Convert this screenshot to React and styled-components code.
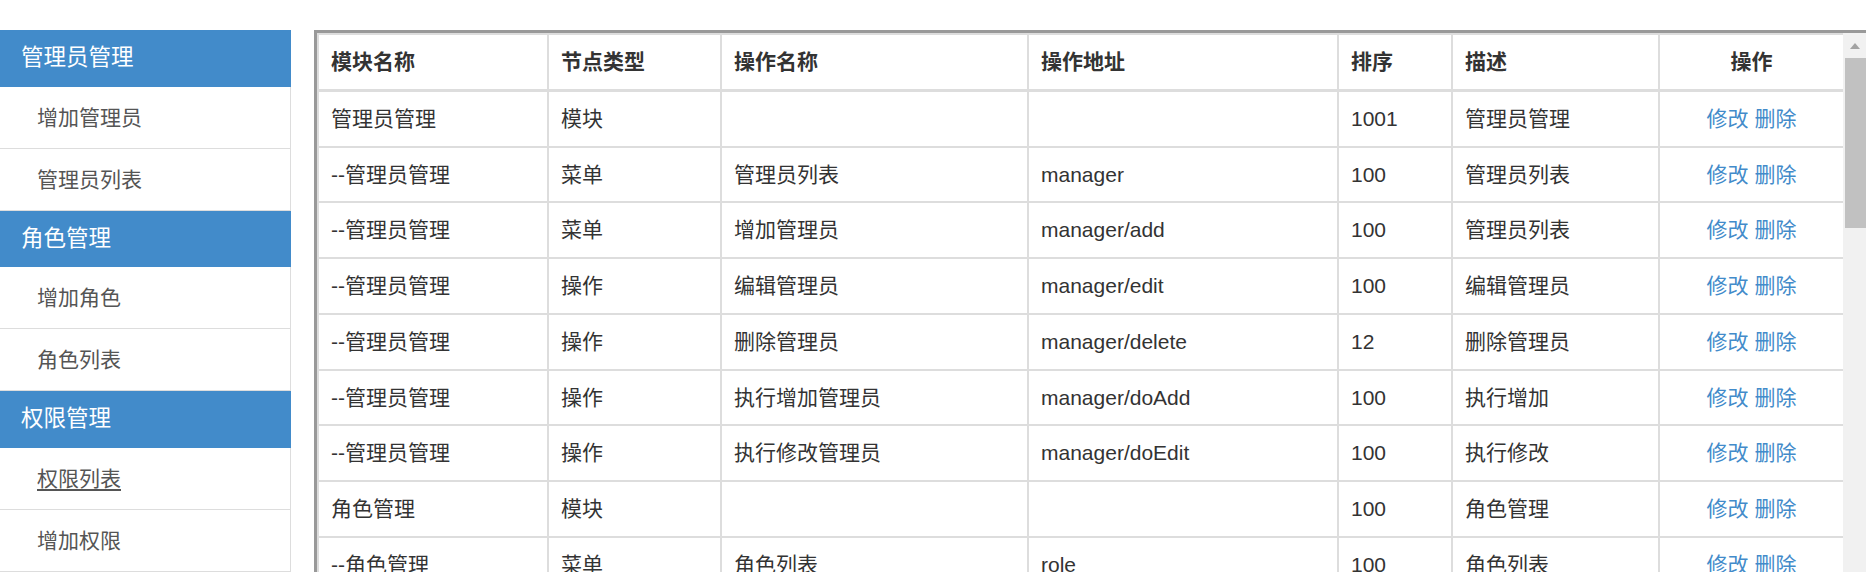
import React from "react";
import styled, { createGlobalStyle } from "styled-components";

const GlobalStyle = createGlobalStyle`
  html, body {
    margin: 0;
    padding: 0;
    overflow: hidden;
    background: #fff;
  }
  body {
    font-family: "Liberation Sans", "Noto Sans CJK SC", sans-serif;
    color: #333;
  }
`;

const menu = [
  { title: "管理员管理", items: ["增加管理员", "管理员列表"] },
  { title: "角色管理", items: ["增加角色", "角色列表"] },
  { title: "权限管理", items: ["权限列表", "增加权限"] },
];

const mod = (name) => [name, "模块", "", "", "100", name];

const rows = [
  ["管理员管理", "模块", "", "", "1001", "管理员管理"],
  ["--管理员管理", "菜单", "管理员列表", "manager", "100", "管理员列表"],
  ["--管理员管理", "菜单", "增加管理员", "manager/add", "100", "管理员列表"],
  ["--管理员管理", "操作", "编辑管理员", "manager/edit", "100", "编辑管理员"],
  ["--管理员管理", "操作", "删除管理员", "manager/delete", "12", "删除管理员"],
  ["--管理员管理", "操作", "执行增加管理员", "manager/doAdd", "100", "执行增加"],
  ["--管理员管理", "操作", "执行修改管理员", "manager/doEdit", "100", "执行修改"],
  mod("角色管理"),
  ["--角色管理", "菜单", "角色列表", "role", "100", "角色列表"],
  ["--角色管理", "菜单", "增加角色", "role/add", "100", "增加角色"],
  ["--角色管理", "操作", "编辑角色", "role/edit", "100", "编辑角色"],
  ["--角色管理", "操作", "删除角色", "role/delete", "100", "删除角色"],
];

const headers = ["模块名称", "节点类型", "操作名称", "操作地址", "排序", "描述", "操作"];
const widths = [230, 173, 307, 310, 114, 207, 185];

const App = () => {
  return (
    <Page>
      <GlobalStyle />
      <Sidebar>
        {menu.map((group) => (
          <React.Fragment key={group.title}>
            <GroupTitle>{group.title}</GroupTitle>
            {group.items.map((item) => (
              <MenuItem key={item}>
                <MenuLink href="#" $active={item === "权限列表"}>
                  {item}
                </MenuLink>
              </MenuItem>
            ))}
          </React.Fragment>
        ))}
      </Sidebar>
      <Panel>
        <TableViewport>
          <Table>
            <colgroup>
              {widths.map((w, i) => (
                <col key={i} style={{ width: w }} />
              ))}
            </colgroup>
            <thead>
              <tr>
                {headers.map((h, i) => (
                  <Th key={h} $center={i === 6}>
                    {h}
                  </Th>
                ))}
              </tr>
            </thead>
            <tbody>
              {rows.map((r, i) => (
                <tr key={i}>
                  {r.map((c, j) => (
                    <Td key={j}>{c}</Td>
                  ))}
                  <Td $center>
                    <ActionLink href="#">修改</ActionLink>{" "}
                    <ActionLink href="#">删除</ActionLink>
                  </Td>
                </tr>
              ))}
            </tbody>
          </Table>
        </TableViewport>
        <ScrollBar>
          <ScrollArrow>
            <ArrowUp />
          </ScrollArrow>
          <ScrollThumb />
        </ScrollBar>
      </Panel>
    </Page>
  );
};

const Page = styled.div`
  display: flex;
  align-items: flex-start;
  gap: 23px;
  width: 1866px;
  padding-top: 30px;
`;

const Sidebar = styled.div`
  flex: none;
  width: 291px;
  display: flex;
  flex-direction: column;
`;

const GroupTitle = styled.div`
  height: 56.5px;
  line-height: 56.5px;
  padding-left: 21px;
  background-color: #428bca;
  color: #fff;
  font-size: 22.5px;
`;

const MenuItem = styled.div`
  height: 61px;
  line-height: 61px;
  padding-left: 37px;
  border-right: 1px solid #ddd;
  border-bottom: 1px solid #ddd;
  font-size: 21px;
`;

const MenuLink = styled.a`
  color: #555;
  text-decoration: ${(p) => (p.$active ? "underline" : "none")};
  text-underline-offset: 3px;
`;

const Panel = styled.div`
  flex: none;
  display: flex;
  box-sizing: border-box;
  width: 1555px;
  height: 566px;
  border: 3px solid #999;
`;

const TableViewport = styled.div`
  flex: 1;
  min-width: 0;
  overflow: hidden;
`;

const ScrollBar = styled.div`
  flex: none;
  width: 23px;
  display: flex;
  flex-direction: column;
  background: #f1f1f1;
`;

const ScrollArrow = styled.div`
  height: 25px;
  display: flex;
  align-items: center;
  justify-content: center;
`;

const ArrowUp = styled.div`
  width: 0;
  height: 0;
  border-left: 5.5px solid transparent;
  border-right: 5.5px solid transparent;
  border-bottom: 6px solid #a3a3a3;
`;

const ScrollThumb = styled.div`
  height: 170px;
  margin-left: 2px;
  background: #c1c1c1;
`;

const Table = styled.table`
  width: 1526px;
  table-layout: fixed;
  border-collapse: collapse;
  border: 2px solid #ddd;
  font-size: 21px;
`;

const Th = styled.th`
  padding: 12px;
  line-height: 30px;
  border: 2px solid #ddd;
  border-bottom-width: 3px;
  font-weight: bold;
  color: #333;
  text-align: ${(p) => (p.$center ? "center" : "left")};
  white-space: nowrap;
`;

const Td = styled.td`
  padding: 12px;
  line-height: 29.7px;
  border: 2px solid #ddd;
  color: #333;
  text-align: ${(p) => (p.$center ? "center" : "left")};
  white-space: nowrap;
`;

const ActionLink = styled.a`
  color: #428bca;
  text-decoration: none;
`;

export default App;
